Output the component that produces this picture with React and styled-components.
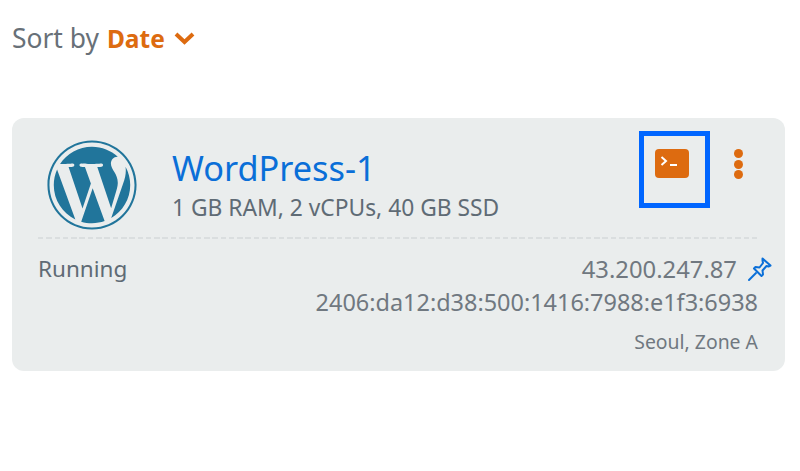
import React from "react";
import styled, { createGlobalStyle } from "styled-components";
import { FaWordpress } from "react-icons/fa";

const Global = createGlobalStyle`
  html, body {
    margin: 0;
    background: #fff;
  }
  body {
    font-family: "Noto Sans", "Open Sans", sans-serif;
  }
`;

const Page = styled.div`
  width: 800px;
  height: 471px;
  padding: 21px 15px 0 12px;
  box-sizing: border-box;
  overflow: hidden;
`;

const SortBar = styled.div`
  display: flex;
  align-items: center;
  height: 34px;
  font-size: 26.400px;
  color: #687078;
`;

const SortValue = styled.span`
  margin-left: 8px;
  color: #dd6b10;
  font-weight: 700;
  font-size: 24.500px;
`;

const Chevron = styled.svg`
  width: 21px;
  height: 14px;
  margin-left: 9px;
  color: #dd6b10;
`;

const Card = styled.section`
  margin-top: 63px;
  height: 253px;
  box-sizing: border-box;
  padding: 13px 27px 0 26px;
  background: #eaeded;
  border-radius: 12px;
`;

const Header = styled.div`
  display: flex;
  align-items: flex-start;
  height: 106px;
`;

const Divider = styled.div`
  height: 2px;
  background: repeating-linear-gradient(to right, #dadedf 0 5.500px, transparent 5.500px 8.300px);
`;

const Logo = styled.div`
  width: 92px;
  height: 92px;
  margin: 7.500px 0 0 7.500px;
  color: #21759b;
  font-size: 92px;
  line-height: 0;
`;

const Titles = styled.div`
  flex: 1;
  margin: 15px 0 0 34.500px;
`;

const Title = styled.div`
  color: #0a6fd8;
  font-size: 34.300px;
  line-height: 44px;
`;

const Specs = styled.div`
  color: #5f6b75;
  font-size: 22.800px;
  line-height: 28px;
  margin-top: 4px;
`;

const ConnectFrame = styled.div`
  width: 71px;
  height: 77px;
  box-sizing: border-box;
  border: 5px solid #0066ff;
  display: flex;
  justify-content: flex-start;
  padding: 13px 0 0 11px;
`;

const Terminal = styled.svg`
  width: 34px;
  height: 29px;
`;

const Dots = styled.div`
  display: flex;
  flex-direction: column;
  gap: 1.500px;
  margin: 18px 15px 0 24px;
`;

const Dot = styled.span`
  width: 9px;
  height: 9px;
  border-radius: 50%;
  background: #dd6b10;
`;

const Body = styled.div`
  display: flex;
  justify-content: space-between;
  padding-top: 14px;
`;

const Status = styled.div`
  color: #5f6b75;
  font-size: 22.500px;
  line-height: 32px;
`;

const Addresses = styled.div`
  display: flex;
  flex-direction: column;
  align-items: flex-end;
  color: #707880;
`;

const Ip = styled.div`
  display: flex;
  align-items: center;
  font-size: 23.800px;
  line-height: 32px;
`;

const PinIcon = styled.svg`
  width: 26px;
  height: 26px;
  margin: 0 -15px 0 10px;
  color: #0a6fd8;
`;

const Ipv6 = styled.div`
  font-size: 23.450px;
  line-height: 32px;
  margin-top: 1px;
`;

const Zone = styled.div`
  font-size: 19.400px;
  line-height: 24px;
  margin-top: 12px;
`;

export default function App() {
  return (
    <Page>
      <Global />
      <SortBar>
        Sort by
        <SortValue>Date</SortValue>
        <Chevron viewBox="0 0 21 14" fill="none" stroke="currentColor" strokeWidth="4">
          <path d="M2 3l8.500 8L19 3" />
        </Chevron>
      </SortBar>
      <Card>
        <Header>
          <Logo>
            <FaWordpress />
          </Logo>
          <Titles>
            <Title>WordPress-1</Title>
            <Specs>1 GB RAM, 2 vCPUs, 40 GB SSD</Specs>
          </Titles>
          <ConnectFrame>
            <Terminal viewBox="0 0 34 29">
              <rect width="34" height="29" rx="4" fill="#dd6b10" />
              <path d="M6.500 8l4.500 4-4.500 4" fill="none" stroke="#fff" strokeWidth="2" />
              <path d="M15 16h7" stroke="#fff" strokeWidth="2" />
            </Terminal>
          </ConnectFrame>
          <Dots>
            <Dot />
            <Dot />
            <Dot />
          </Dots>
        </Header>
        <Divider />
        <Body>
          <Status>Running</Status>
          <Addresses>
            <Ip>
              43.200.247.87
              <PinIcon viewBox="0 0 26 26" fill="none" stroke="currentColor" strokeWidth="2" strokeLinejoin="round">
                <path d="M15.500 2.500l8 7-2 1-2-.500-4 4.500 .500 4-1.500 1.500-4-4-3.500-3.500 1.500-1.500 4 .500 3.500-4.500-.500-2.500z" />
                <path d="M9 17L2 24" strokeLinecap="round" />
              </PinIcon>
            </Ip>
            <Ipv6>2406:da12:d38:500:1416:7988:e1f3:6938</Ipv6>
            <Zone>Seoul, Zone A</Zone>
          </Addresses>
        </Body>
      </Card>
    </Page>
  );
}
